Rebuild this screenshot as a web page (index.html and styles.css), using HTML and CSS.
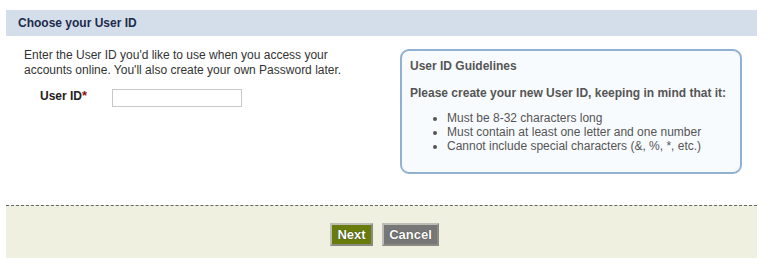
FILE: index.html
```html
<!DOCTYPE html>
<html lang="en">
<head>
    <meta charset="UTF-8">
    <title>Choose your User ID</title>
    <link rel="stylesheet" href="styles.css">
</head>
<body>

<div class="page">
    <!-- Section header -->
    <div class="section-header">Choose your User ID</div>

    <div class="section-body">
        <div class="intro">
            <p>Enter the User ID you'd like to use when you access your accounts online. You'll also create your own Password later.</p>
            <div class="field-row">
                <label for="user_id">User ID<span class="req">*</span></label>
                <input type="text" id="user_id">
            </div>
        </div>

        <!-- Guidelines box -->
        <div class="guidelines">
            <h3>User ID Guidelines</h3>
            <p>Please create your new User ID, keeping in mind that it:</p>
            <ul>
                <li>Must be 8-32 characters long</li>
                <li>Must contain at least one letter and one number</li>
                <li>Cannot include special characters (&amp;, %, *, etc.)</li>
            </ul>
        </div>
    </div>

    <div class="actions">
        <button type="button" class="btn btn-next">Next</button>
        <button type="button" class="btn btn-cancel">Cancel</button>
    </div>
</div>

</body>
</html>
```

FILE: styles.css
```css
body {
    margin: 0;
    font-family: 'Liberation Sans', Arial, sans-serif;
    font-size: 12px;
    color: #333;
    background: white;
}

.page {
    width: 751px;
    padding: 10px 0 0 6px;
}

.section-header {
    height: 26px;
    line-height: 26px;
    padding-left: 12px;
    background-color: #d4deea;
    color: #1c2b4b;
    font-size: 12px;
    font-weight: bold;
}

.section-body {
    display: flex;
    height: 169px;
    padding-top: 12px;
    box-sizing: border-box;
}

.intro {
    width: 394px;
    flex-shrink: 0;
    padding-left: 18px;
    box-sizing: border-box;
}

.intro p {
    margin: 0;
    font-size: 12px;
    line-height: 15px;
    width: 330px;
}

.field-row {
    display: flex;
    align-items: center;
    margin-top: 11px;
}

.field-row label {
    width: 88px;
    padding-left: 16px;
    box-sizing: border-box;
    font-weight: bold;
    font-size: 12px;
    color: #222;
    margin-top: -6px;
}

.req {
    color: #8b1010;
    font-size: 13px;
}

.field-row input {
    width: 130px;
    height: 18px;
    box-sizing: border-box;
    border: 1px solid #c8c8c8;
    padding: 0 3px;
    margin: 0;
}

.guidelines {
    width: 342px;
    height: 125px;
    flex-shrink: 0;
    margin-top: 1px;
    box-sizing: border-box;
    border: 2px solid #91b1d1;
    border-radius: 9px;
    background-color: #f8fbfe;
    padding: 8px 8px 0 8px;
    color: #555;
    font-size: 12px;
}

.guidelines h3 {
    margin: 0;
    font-size: 12px;
    line-height: 14px;
}

.guidelines p {
    margin: 13px 0 0 0;
    font-weight: bold;
    line-height: 14px;
}

.guidelines ul {
    margin: 11px 0 0 0;
    padding-left: 37px;
    line-height: 14px;
}

.actions {
    display: flex;
    justify-content: center;
    gap: 9px;
    height: 53px;
    padding-top: 17px;
    padding-left: 6px;
    box-sizing: border-box;
    border-top: 1px dashed #666;
    background-color: #f0f0e0;
}

.btn {
    height: 23px;
    padding: 0 4px;
    border: 2px solid #bdbdb5;
    border-right-color: #8a8a80;
    border-bottom-color: #8a8a80;
    font-family: 'Liberation Sans', Arial, sans-serif;
    font-size: 13px;
    font-weight: bold;
    color: white;
    text-shadow: 0 0 1px #222;
    cursor: pointer;
}

.btn-next {
    width: 43px;
    background-color: #687c0b;
}

.btn-cancel {
    width: 57px;
    background-color: #777;
}
```
